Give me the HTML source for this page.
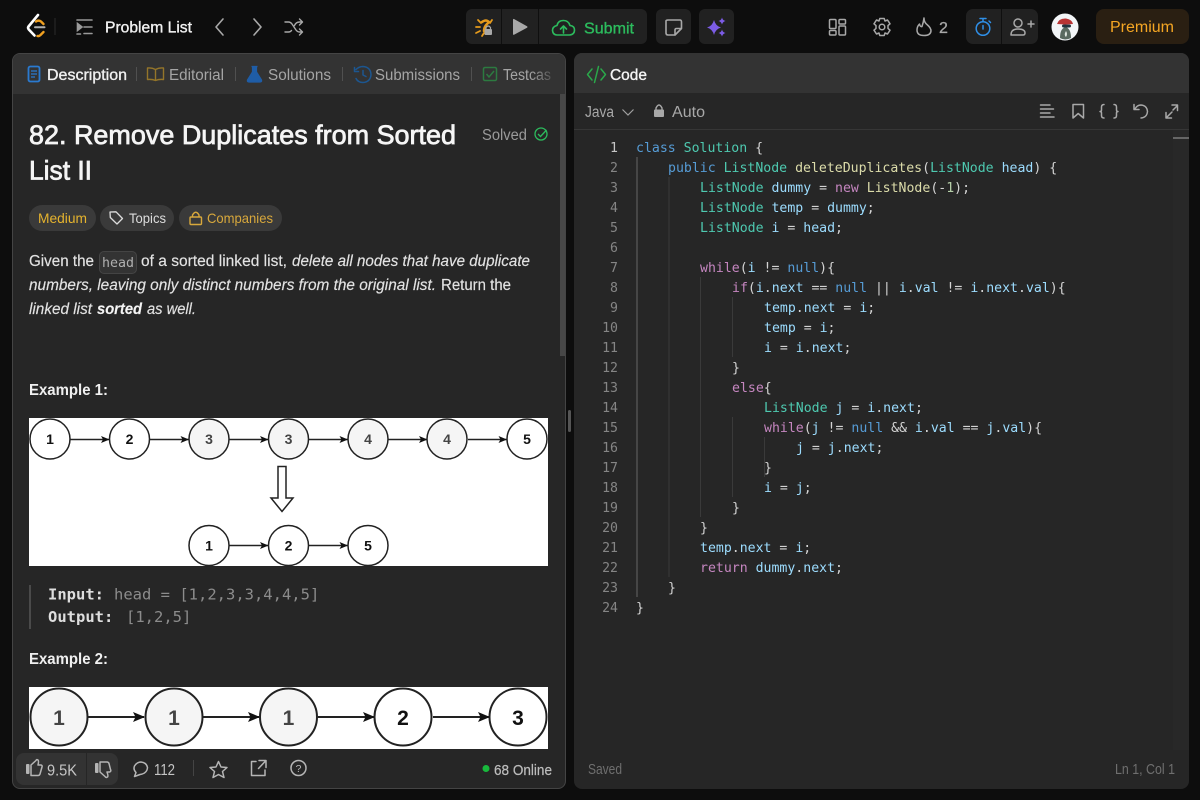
<!DOCTYPE html>
<html lang="en"><head><meta charset="utf-8"><title>Remove Duplicates from Sorted List II</title>
<style>
html,body{margin:0;padding:0;width:1200px;height:800px;overflow:hidden;background:#0d0d0d}
.a{position:absolute;box-sizing:border-box}
svg{position:absolute;left:0;top:0}
text{font-family:"Liberation Sans",sans-serif;white-space:pre}
.s{stroke:currentColor;stroke-width:.35px}
.h{stroke:currentColor;stroke-width:.75px}
.m{font-family:"DejaVu Sans Mono","Liberation Mono",monospace;font-size:13.2px}
.i{fill:none;stroke:currentColor;stroke-width:1.5;stroke-linecap:round;stroke-linejoin:round}
.k{fill:#569cd6}.t{fill:#4ec9b0}.f{fill:#dcdcaa}.v{fill:#9cdcfe}.c{fill:#c586c0}.p{fill:#d4d4d4}.n{fill:#b5cea8}
.ln{font-family:"DejaVu Sans Mono","Liberation Mono",monospace;font-size:13.2px;fill:#858585;text-anchor:end}
</style></head><body>
<div class="a" style="left:12px;top:53px;width:554px;height:736px;background:#262626;border:1px solid #444;border-radius:8px;overflow:hidden">
  <div class="a" style="left:0;top:0;width:100%;height:40px;background:#333"></div>
  <div class="a" style="left:547px;top:40px;width:5px;height:262px;background:#474747"></div>
</div>
<div class="a" style="left:574px;top:53px;width:615px;height:736px;background:#262626;border-radius:8px;overflow:hidden">
  <div class="a" style="left:0;top:0;width:100%;height:40px;background:#333"></div>
  <div class="a" style="left:0;top:76px;width:100%;height:1px;background:#363636"></div>
</div>
<div class="a" style="left:568px;top:410px;width:3px;height:22px;background:#555;border-radius:2px"></div>
<div class="a" style="left:466px;top:9px;width:181px;height:35px;background:#212121;border-radius:6px"></div>
<div class="a" style="left:656px;top:9px;width:35px;height:35px;background:#212121;border-radius:6px"></div>
<div class="a" style="left:699px;top:9px;width:35px;height:35px;background:#212121;border-radius:6px"></div>
<div class="a" style="left:966px;top:9px;width:72px;height:35px;background:#212121;border-radius:7px"></div>
<div class="a" style="left:1096px;top:9px;width:93px;height:35px;background:#2a1f12;border-radius:8px"></div>
<div class="a" style="left:16px;top:753px;width:102px;height:32px;background:#333;border-radius:8px"></div>
<div class="a" style="left:29px;top:205px;width:67px;height:26px;background:#3a3a3a;border-radius:13px"></div>
<div class="a" style="left:100px;top:205px;width:74px;height:26px;background:#3a3a3a;border-radius:13px"></div>
<div class="a" style="left:179px;top:205px;width:103px;height:26px;background:#3a3a3a;border-radius:13px"></div>
<div class="a" style="left:99px;top:251px;width:38px;height:23px;background:#333;border:1px solid #444;border-radius:5px"></div>
<div class="a" style="left:29px;top:418px;width:519px;height:148px;background:#fff"></div>
<div class="a" style="left:29px;top:687px;width:519px;height:62px;background:#fff"></div>
<div class="a" style="left:29px;top:585px;width:2px;height:44px;background:#4a4a4a"></div>
<div class="a" style="left:1173px;top:130px;width:16px;height:620px;background:#282828"></div>
<div class="a" style="left:1173px;top:137px;width:16px;height:2px;background:#666"></div>

<svg width="1200" height="800" viewBox="0 0 1200 800" xmlns="http://www.w3.org/2000/svg">
<defs>
<linearGradient id="fd" x1="0" x2="1" y1="0" y2="0"><stop offset="0" stop-color="#a5a5a5"/><stop offset=".55" stop-color="#a5a5a5"/><stop offset="1" stop-color="#555"/></linearGradient>
<marker id="ah" markerWidth="9" markerHeight="8" refX="8" refY="3.500" orient="auto" markerUnits="userSpaceOnUse"><path d="M0 0L8.500 3.500L0 7L2 3.500Z" fill="#111"/></marker>
<marker id="ah2" markerWidth="12" markerHeight="12" refX="11" refY="5" orient="auto" markerUnits="userSpaceOnUse"><path d="M0 0L12 5L0 10L2.500 5Z" fill="#111"/></marker>
</defs>

<!-- header -->
<g fill="none" stroke-linecap="round" stroke-linejoin="round">
<path d="M38 15L28.500 26.500Q27.500 28 28.800 29.500L34.500 35.500" stroke="#fff" stroke-width="2.600"/>
<path d="M36 21.500Q38.500 19.800 41 21.500L43.500 24" stroke="#f0a020" stroke-width="2.400"/>
<path d="M37.500 36Q39 36.500 40.500 35L43.500 32" stroke="#f0a020" stroke-width="2.400"/>
<path d="M35 27.300H44.500" stroke="#b0b0b0" stroke-width="2"/>
</g>
<path d="M55 18V35" stroke="#2c2c2c"/>
<g stroke="#9a9a9a" fill="none" stroke-width="1.600" stroke-linecap="round">
<path d="M77 20H92M84 27H92M84 33.500H92M77 34H80.500"/>
<path d="M77.500 23.500L82 27L77.500 30.500Z" fill="#9a9a9a"/>
</g>
<text x="105" y="32.500" font-size="15.500" fill="#f2f2f2" class="s" color="#f2f2f2" textLength="87" lengthAdjust="spacingAndGlyphs">Problem List</text>
<g class="i" color="#a8a8a8">
<path d="M223 19L216 27L223 35" stroke-width="1.600"/><path d="M254 19L261 27L254 35" stroke-width="1.600"/>
<path d="M285 22H288.500Q290.500 22 292 24L296 30Q297.500 32 299.500 32H302M285 32H288.500Q290.500 32 291.500 30.500M294.500 25.500Q296 22 299.500 22H302M299.500 19L302.500 22L299.500 25M299.500 29L302.500 32L299.500 35" stroke-width="1.400"/>
</g>
<!-- run group -->
<path d="M501.500 9V44M538.500 9V44" stroke="#0f0f0f" stroke-width="1"/>
<g fill="none" stroke="#e59a1c" stroke-width="1.800" stroke-linecap="round">
<path d="M478 20L481 23M492 20L490 23M476 27H480M476 33L480 31M482 36L484 33"/>
<path d="M482 22Q486 19 489 22L487 24Q484 27 484 31" stroke-width="2.500"/>
</g>
<rect x="484.500" y="29" width="7.500" height="6" rx="1" fill="#a8a8a8"/><path d="M486 29V27.500Q488.200 24.500 490.500 27.500V29" fill="none" stroke="#a8a8a8" stroke-width="1.200"/>
<path d="M514 19Q513 18.500 513 20V34Q513 35.500 514.500 34.500L527 27.800Q528 27 527 26.300Z" fill="#a8a8a8"/>
<g class="i" color="#2cbb5d"><path d="M557 35H561.500M565 35H569.500Q574.500 34.500 574.500 30Q574.500 26 570 25.500Q568.500 20.500 563.500 20.500Q558 20.500 557 25.500Q552.500 26.500 552.500 30.500Q553 35 557 35Z" stroke-width="1.600"/><path d="M563.500 33V26M560.500 29L563.500 26L566.500 29" stroke-width="1.600"/></g>
<text x="584" y="33.500" font-size="16" fill="#2cbb5d" class="s" color="#2cbb5d" textLength="50" lengthAdjust="spacingAndGlyphs">Submit</text>
<path d="M675 35H668Q666 35 666 33V21Q666 20 668 20H680Q681.500 20 681.500 22V28.500L675 35V30Q675 28.500 676.500 28.500H681.500" fill="none" stroke="#a8a8a8" stroke-width="1.600" stroke-linejoin="round"/>
<g fill="#7c5ce6"><path d="M714 20Q715.500 26 721 27.500Q715.500 29 714 35Q712.500 29 707 27.500Q712.500 26 714 20Z"/><path d="M722 17.500Q722.700 20.300 725.500 21Q722.700 21.700 722 24.500Q721.300 21.700 718.500 21Q721.300 20.300 722 17.500Z"/><path d="M722 29.500Q722.700 32.300 725.500 33Q722.700 33.700 722 36.500Q721.300 33.700 718.500 33Q721.300 32.300 722 29.500Z"/></g>
<!-- right -->
<g class="i" color="#a8a8a8" stroke-width="1.500">
<rect x="829.500" y="19.500" width="6.500" height="9" rx="1"/><rect x="839" y="19.500" width="6.500" height="4.500" rx="1"/><rect x="829.500" y="30.500" width="6.500" height="4.500" rx="1"/><rect x="839" y="26" width="6.500" height="9" rx="1"/>
<circle cx="882" cy="27" r="2.800"/><path d="M879.800 18.500H884.200L885 21L887.500 20L890 23.800L888 25.600V28.400L890 30.200L887.500 34L885 33L884.200 35.500H879.800L879 33L876.500 34L874 30.200L876 28.400V25.600L874 23.800L876.500 20L879 21Z"/>
<path d="M924 18Q924 22.500 927.500 25Q931 28 931 31Q930.500 35.500 924 35.500Q917 35.500 917 30Q917 26.500 919.500 24Q920 27 922 26.500Q923.500 22 924 18Z"/>
</g>
<text x="939" y="33" font-size="16" fill="#a8a8a8" stroke="#a8a8a8" stroke-width=".3">2</text>
<path d="M1001.500 9V44" stroke="#0f0f0f"/>
<g class="i" color="#2f8fe6" stroke-width="1.800"><circle cx="983" cy="28.500" r="6.800"/><path d="M980 18.500H986M983 18.500V21.500M989 21L990.500 22.500M983 25.500V29"/></g>
<g class="i" color="#a8a8a8"><circle cx="1018" cy="23" r="4"/><path d="M1011 35Q1011 29 1018 29Q1025 29 1025 33Q1025 35 1023 35H1011Z"/><path d="M1028 24H1034M1031 21V27"/></g>
<circle cx="1065" cy="27" r="13.500" fill="#f2f5f7"/>
<path d="M1060 38Q1060 28 1066 27Q1071 29 1071 38Q1065 41 1060 38Z" fill="#5a6a60"/>
<path d="M1057 24Q1059 18 1066 18.500Q1072 19.500 1073 24L1065 24.500Z" fill="#b83434"/>
<rect x="1062" y="24.500" width="9" height="3" rx="1.500" fill="#22343f"/>
<path d="M1066 31Q1068 34 1066 37Q1063.500 35 1066 31Z" fill="#dfe6df"/>
<text x="1110" y="32" font-size="15.500" fill="#f5a623" textLength="64" lengthAdjust="spacingAndGlyphs">Premium</text>

<!-- left tabs -->
<rect x="28.500" y="66.500" width="11" height="15" rx="1.800" fill="none" stroke="#2a7ad0" stroke-width="1.800"/>
<path d="M31 71H37M31 74H37M31 77H35" stroke="#2a7ad0" stroke-width="1.300"/>
<text x="47" y="80" font-size="15.500" fill="#f0f0f0" class="s" color="#f0f0f0" textLength="80" lengthAdjust="spacingAndGlyphs">Description</text>
<path d="M136.500 67V81M235.500 67V81M342.500 67V81M471.500 67V81" stroke="#505050"/>
<path d="M155.500 69.500Q152 67.500 147.500 68V79.500Q152 79 155.500 80.500Q159 79 163.500 79.500V68Q159 67.500 155.500 69.500ZM155.500 69.500V80.500" fill="none" stroke="#94752a" stroke-width="1.400" stroke-linejoin="round"/>
<text x="169" y="80" font-size="15.500" fill="#a5a5a5" textLength="55" lengthAdjust="spacingAndGlyphs">Editorial</text>
<path d="M251.500 66.500H257.500M252.500 66.500V72L247.500 80Q247 82 249 82H260Q262 82 261.500 80L256.500 72V66.500Z" fill="#1f5da6" stroke="#1f5da6" stroke-width="1.200" stroke-linejoin="round"/>
<text x="268" y="80" font-size="15.500" fill="#a5a5a5" textLength="63" lengthAdjust="spacingAndGlyphs">Solutions</text>
<g class="i" color="#1c5690" stroke-width="1.500"><path d="M356 69.500Q359 66.500 363 66.500Q370.500 67 371 74.500Q370.500 82 363 82.500Q358 82.500 356 78.500M354.500 67.500V71.500H358.500M363 70.500V75L366 76.500"/></g>
<text x="375" y="80" font-size="15.500" fill="#a5a5a5" textLength="85" lengthAdjust="spacingAndGlyphs">Submissions</text>
<rect x="483.500" y="67.500" width="13" height="13" rx="1.500" fill="none" stroke="#2c7a40" stroke-width="1.500"/><path d="M486.500 74L489 77L494 71" fill="none" stroke="#2c7a40" stroke-width="1.500"/>
<text x="503" y="80" font-size="15.500" fill="url(#fd)" textLength="48" lengthAdjust="spacingAndGlyphs">Testcas</text>

<!-- title -->
<text x="29" y="144" font-size="27" fill="#f5f5f5" class="h" color="#f5f5f5" textLength="427" lengthAdjust="spacingAndGlyphs">82. Remove Duplicates from Sorted</text>
<text x="29" y="179.500" font-size="27" fill="#f5f5f5" class="h" color="#f5f5f5" textLength="63" lengthAdjust="spacingAndGlyphs">List II</text>
<text x="482" y="140" font-size="15.500" fill="#9a9a9a" textLength="45" lengthAdjust="spacingAndGlyphs">Solved</text>
<circle cx="541" cy="134" r="6" fill="none" stroke="#2cbb5d" stroke-width="1.300"/><path d="M538 134L540.500 136.500L546.500 130" fill="none" stroke="#2cbb5d" stroke-width="1.300"/>
<text x="38" y="223" font-size="14" fill="#e5b32e" textLength="49" lengthAdjust="spacingAndGlyphs">Medium</text>
<path d="M110 212L116 211.800L122.500 218.500L117 224L110.300 217.500Z" fill="none" stroke="#dcdcdc" stroke-width="1.300" stroke-linejoin="round"/>
<text x="129" y="223" font-size="14" fill="#dcdcdc" textLength="37" lengthAdjust="spacingAndGlyphs">Topics</text>
<rect x="190" y="217" width="11.500" height="7.500" rx="1" fill="none" stroke="#d8a83c" stroke-width="1.400"/><path d="M192.500 217V215Q195.800 209.500 199 215V217" fill="none" stroke="#d8a83c" stroke-width="1.400"/>
<text x="207" y="223" font-size="14" fill="#d8a83c" textLength="66" lengthAdjust="spacingAndGlyphs">Companies</text>

<!-- description -->
<g font-size="15.500" fill="#e3e3e3" stroke="#e3e3e3" stroke-width=".15">
<text x="29" y="266" textLength="65" lengthAdjust="spacingAndGlyphs">Given the</text>
<text x="141" y="266" textLength="146" lengthAdjust="spacingAndGlyphs">of a sorted linked list,</text>
<text x="292" y="266" font-style="italic" textLength="238" lengthAdjust="spacingAndGlyphs">delete all nodes that have duplicate</text>
<text x="29" y="290" font-style="italic" textLength="407" lengthAdjust="spacingAndGlyphs">numbers, leaving only distinct numbers from the original list.</text>
<text x="441" y="290" textLength="70" lengthAdjust="spacingAndGlyphs">Return the</text>
<text x="29" y="314" font-style="italic" textLength="63" lengthAdjust="spacingAndGlyphs">linked list</text>
<text x="97" y="314" font-style="italic" font-weight="bold" fill="#f5f5f5" textLength="45" lengthAdjust="spacingAndGlyphs">sorted</text>
<text x="147" y="314" font-style="italic" textLength="49" lengthAdjust="spacingAndGlyphs">as well.</text>
</g>
<text x="102" y="267" class="m" fill="#b0b0b0" style="font-size:13.500px" textLength="32" lengthAdjust="spacingAndGlyphs">head</text>
<text x="29" y="395" font-size="15.500" font-weight="bold" fill="#f0f0f0" textLength="79" lengthAdjust="spacingAndGlyphs">Example 1:</text>
<text x="29" y="664" font-size="15.500" font-weight="bold" fill="#f0f0f0" textLength="79" lengthAdjust="spacingAndGlyphs">Example 2:</text>

<!-- diagram 1 -->
<g stroke="#222" stroke-width="1.500" fill="none">
<path d="M70.500 439.500H109" marker-end="url(#ah)"/><path d="M150 439.500H188.500" marker-end="url(#ah)"/><path d="M229.500 439.500H268" marker-end="url(#ah)"/><path d="M309 439.500H347.500" marker-end="url(#ah)"/><path d="M388.500 439.500H427" marker-end="url(#ah)"/><path d="M468 439.500H506.500" marker-end="url(#ah)"/>
<path d="M229.500 545.500H268" marker-end="url(#ah)"/><path d="M309 545.500H347.500" marker-end="url(#ah)"/>
<g fill="#fff"><circle cx="50" cy="439" r="20"/><circle cx="129.500" cy="439" r="20"/><circle cx="527" cy="439" r="20"/><circle cx="209" cy="545.500" r="20"/><circle cx="288.500" cy="545.500" r="20"/><circle cx="368" cy="545.500" r="20"/></g>
<g fill="#f5f5f5"><circle cx="209" cy="439" r="20"/><circle cx="288.500" cy="439" r="20"/><circle cx="368" cy="439" r="20"/><circle cx="447" cy="439" r="20"/></g>
<path d="M278 466.500H286V498H293L282 511.500L271 498H278Z" fill="#fff"/>
</g>
<g font-size="14" font-weight="bold" text-anchor="middle">
<text x="50" y="444" fill="#111">1</text><text x="129.500" y="444" fill="#111">2</text><text x="209" y="444" fill="#444">3</text><text x="288.500" y="444" fill="#444">3</text><text x="368" y="444" fill="#444">4</text><text x="447" y="444" fill="#444">4</text><text x="527" y="444" fill="#111">5</text>
<text x="209" y="550.500" fill="#111">1</text><text x="288.500" y="550.500" fill="#111">2</text><text x="368" y="550.500" fill="#111">5</text>
</g>

<!-- example text -->
<text x="48" y="599.500" class="m" style="font-size:15.500px" font-weight="bold" fill="#dedede">Input:</text>
<text x="114" y="599.500" class="m" style="font-size:15.500px" fill="#8c8c8c">head = [1,2,3,3,4,4,5]</text>
<text x="48" y="622" class="m" style="font-size:15.500px" font-weight="bold" fill="#dedede">Output:</text>
<text x="126" y="622" class="m" style="font-size:15.500px" fill="#8c8c8c">[1,2,5]</text>

<!-- diagram 2 -->
<g stroke="#222" stroke-width="2" fill="none">
<path d="M88 717H144" marker-end="url(#ah2)"/><path d="M203 717H259" marker-end="url(#ah2)"/><path d="M318 717H374" marker-end="url(#ah2)"/><path d="M433 717H489" marker-end="url(#ah2)"/>
<g fill="#f5f5f5"><circle cx="59" cy="717" r="28.500"/><circle cx="174" cy="717" r="28.500"/><circle cx="288.500" cy="717" r="28.500"/></g>
<g fill="#fff"><circle cx="403" cy="717" r="28.500"/><circle cx="518" cy="717" r="28.500"/></g>
</g>
<g font-size="21" font-weight="bold" text-anchor="middle"><text x="59" y="725" fill="#444">1</text><text x="174" y="725" fill="#444">1</text><text x="288.500" y="725" fill="#444">1</text><text x="403" y="725" fill="#111">2</text><text x="518" y="725" fill="#111">3</text></g>

<!-- bottom left -->
<path d="M86.500 753V785" stroke="#262626"/>
<g class="i" color="#b5b5b5">
<rect x="26" y="764" width="3.500" height="10" rx="1" fill="#b5b5b5" stroke="none"/>
<path d="M31 765L36 760.500Q36.500 759 38 760Q39 761 38 765H41Q42.500 765.500 42 767L40 774Q39.500 775.500 38 775.500H31Z"/>
<rect x="95" y="763" width="3.500" height="10" rx="1" fill="#b5b5b5" stroke="none"/>
<path d="M100 772L105 776.500Q106 778 107.500 777Q108.500 776 107 772H109.500Q111.500 771.500 110.500 769.500L109 763.500Q108.500 762 107 762H100Z"/>
<path d="M140 774.500L134.500 776.500L136 772.500Q133 769.500 134.500 766Q137 762 141 762Q146.500 762.500 147.500 767.500Q147 773.500 140 774.500Z"/>
<path d="M218.500 761.500L221 767L227 767.500L222.500 771.500L224 777.500L218.500 774.500L213 777.500L214.500 771.500L210 767.500L216 767Z"/>
<path d="M256 761.500H251.500V775.500H265V770M259 760.500H266V767.500M266 760.500L258.500 768.500"/>
<circle cx="298.500" cy="768" r="7.500"/>
</g>
<path d="M193.500 760V776" stroke="#444"/>
<text x="298.500" y="772" font-size="10.500" fill="#b5b5b5" text-anchor="middle">?</text>
<text x="47" y="775.500" font-size="16" fill="#c5c5c5" textLength="30" lengthAdjust="spacingAndGlyphs">9.5K</text>
<text x="154" y="775" font-size="16" fill="#c5c5c5" textLength="21" lengthAdjust="spacingAndGlyphs">112</text>
<circle cx="486" cy="768.500" r="3.500" fill="#18b93c"/>
<text x="494" y="775" font-size="14.500" fill="#bdbdbd" stroke="#bdbdbd" stroke-width=".2" textLength="58" lengthAdjust="spacingAndGlyphs">68 Online</text>

<!-- right panel header -->
<g class="i" color="#2aa84a" stroke-width="1.500"><path d="M592 69L587.500 74.500L592 80M601 69L605.500 74.500L601 80M598.500 66.500L594.500 82.500"/></g>
<text x="610" y="80" font-size="15.500" fill="#f5f5f5" class="s" color="#f5f5f5" textLength="37" lengthAdjust="spacingAndGlyphs">Code</text>
<text x="585" y="117" font-size="15.500" fill="#a8a8a8" textLength="29" lengthAdjust="spacingAndGlyphs">Java</text>
<path d="M622.500 109.500L628 115L633.500 109.500" fill="none" stroke="#a0a0a0" stroke-width="1.200"/>
<rect x="654" y="109.500" width="10" height="7.500" rx="1" fill="#a8a8a8"/><path d="M656 110V108Q659 102 662 108V110" fill="none" stroke="#a8a8a8" stroke-width="1.400"/>
<text x="672" y="117" font-size="15.500" fill="#a8a8a8" textLength="33" lengthAdjust="spacingAndGlyphs">Auto</text>
<g class="i" color="#a8a8a8" stroke-width="1.400">
<path d="M1040.500 105H1050M1040.500 109H1053.500M1040.500 113H1050M1040.500 117H1054"/>
<path d="M1073 104.500H1083.500V118L1078.200 113.500L1073 118Z"/>
<path d="M1104 104.500Q1101.500 104.500 1101.500 107V110Q1101.500 111.500 1100 111.500Q1101.500 111.500 1101.500 113V115.500Q1101.500 118 1104 118M1114 104.500Q1116.500 104.500 1116.500 107V110Q1116.500 111.500 1118 111.500Q1116.500 111.500 1116.500 113V115.500Q1116.500 118 1114 118"/>
<path d="M1135 109Q1137 105 1141 105Q1147 105.500 1147.500 111.500Q1147 117.500 1141 118M1134 104.500V109.500H1139"/>
<path d="M1166 118L1172 112M1166 112.500V118H1171.500M1177.500 105.500L1173 110M1172 105H1177.500V110.500"/>
</g>

<!-- indent guides -->
<path d="M637 157V597" stroke="#5c5c5c" stroke-width="1.200"/>
<path d="M669 177V577M700.500 277V517M732.500 297V357M732.500 417V497M764.500 437V477" stroke="#3a3a3a"/>

<!-- line numbers -->
<text class="ln" x="618" y="152" style="fill:#c6c6c6">1</text><text class="ln" x="618" y="172">2</text><text class="ln" x="618" y="192">3</text><text class="ln" x="618" y="212">4</text><text class="ln" x="618" y="232">5</text><text class="ln" x="618" y="252">6</text><text class="ln" x="618" y="272">7</text><text class="ln" x="618" y="292">8</text><text class="ln" x="618" y="312">9</text><text class="ln" x="618" y="332">10</text><text class="ln" x="618" y="352">11</text><text class="ln" x="618" y="372">12</text><text class="ln" x="618" y="392">13</text><text class="ln" x="618" y="412">14</text><text class="ln" x="618" y="432">15</text><text class="ln" x="618" y="452">16</text><text class="ln" x="618" y="472">17</text><text class="ln" x="618" y="492">18</text><text class="ln" x="618" y="512">19</text><text class="ln" x="618" y="532">20</text><text class="ln" x="618" y="552">21</text><text class="ln" x="618" y="572">22</text><text class="ln" x="618" y="592">23</text><text class="ln" x="618" y="612">24</text>

<!-- code -->
<text class="m p" x="636" y="152"><tspan class="k">class</tspan> <tspan class="t">Solution</tspan> {</text>
<text class="m p" x="668" y="172"><tspan class="k">public</tspan> <tspan class="t">ListNode</tspan> <tspan class="f">deleteDuplicates</tspan>(<tspan class="t">ListNode</tspan> <tspan class="v">head</tspan>) {</text>
<text class="m p" x="700" y="192"><tspan class="t">ListNode</tspan> <tspan class="v">dummy</tspan> = <tspan class="c">new</tspan> <tspan class="f">ListNode</tspan>(-<tspan class="n">1</tspan>);</text>
<text class="m p" x="700" y="212"><tspan class="t">ListNode</tspan> <tspan class="v">temp</tspan> = <tspan class="v">dummy</tspan>;</text>
<text class="m p" x="700" y="232"><tspan class="t">ListNode</tspan> <tspan class="v">i</tspan> = <tspan class="v">head</tspan>;</text>
<text class="m p" x="700" y="272"><tspan class="c">while</tspan>(<tspan class="v">i</tspan> != <tspan class="k">null</tspan>){</text>
<text class="m p" x="732" y="292"><tspan class="c">if</tspan>(<tspan class="v">i</tspan>.<tspan class="v">next</tspan> == <tspan class="k">null</tspan> || <tspan class="v">i</tspan>.<tspan class="v">val</tspan> != <tspan class="v">i</tspan>.<tspan class="v">next</tspan>.<tspan class="v">val</tspan>){</text>
<text class="m p" x="764" y="312"><tspan class="v">temp</tspan>.<tspan class="v">next</tspan> = <tspan class="v">i</tspan>;</text>
<text class="m p" x="764" y="332"><tspan class="v">temp</tspan> = <tspan class="v">i</tspan>;</text>
<text class="m p" x="764" y="352"><tspan class="v">i</tspan> = <tspan class="v">i</tspan>.<tspan class="v">next</tspan>;</text>
<text class="m p" x="732" y="372">}</text>
<text class="m p" x="732" y="392"><tspan class="c">else</tspan>{</text>
<text class="m p" x="764" y="412"><tspan class="t">ListNode</tspan> <tspan class="v">j</tspan> = <tspan class="v">i</tspan>.<tspan class="v">next</tspan>;</text>
<text class="m p" x="764" y="432"><tspan class="c">while</tspan>(<tspan class="v">j</tspan> != <tspan class="k">null</tspan> &amp;&amp; <tspan class="v">i</tspan>.<tspan class="v">val</tspan> == <tspan class="v">j</tspan>.<tspan class="v">val</tspan>){</text>
<text class="m p" x="796" y="452"><tspan class="v">j</tspan> = <tspan class="v">j</tspan>.<tspan class="v">next</tspan>;</text>
<text class="m p" x="764" y="472">}</text>
<text class="m p" x="764" y="492"><tspan class="v">i</tspan> = <tspan class="v">j</tspan>;</text>
<text class="m p" x="732" y="512">}</text>
<text class="m p" x="700" y="532">}</text>
<text class="m p" x="700" y="552"><tspan class="v">temp</tspan>.<tspan class="v">next</tspan> = <tspan class="v">i</tspan>;</text>
<text class="m p" x="700" y="572"><tspan class="c">return</tspan> <tspan class="v">dummy</tspan>.<tspan class="v">next</tspan>;</text>
<text class="m p" x="668" y="592">}</text>
<text class="m p" x="636" y="612">}</text>
<text x="588" y="774" font-size="14.500" fill="#6f6f6f" textLength="34" lengthAdjust="spacingAndGlyphs">Saved</text>
<text x="1115" y="774" font-size="14.500" fill="#6f6f6f" textLength="60" lengthAdjust="spacingAndGlyphs">Ln 1, Col 1</text>
</svg>
</body></html>
